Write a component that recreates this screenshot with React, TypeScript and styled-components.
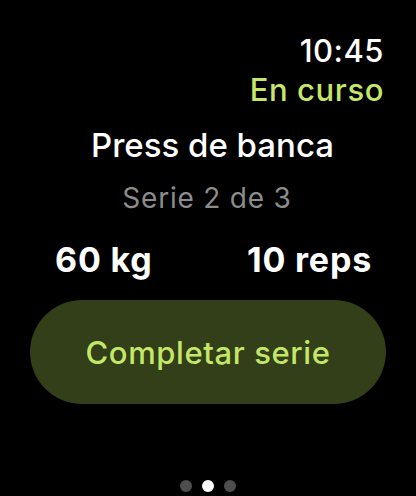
import React from 'react';
import styled, { createGlobalStyle } from 'styled-components';

const GlobalStyle = createGlobalStyle`
  html, body {
    margin: 0;
    padding: 0;
    background: #000000;
  }
  body {
    font-family: Inter, "Noto Sans", sans-serif;
    -webkit-font-smoothing: antialiased;
  }
`;

const Screen = styled.div`
  width: 416px;
  height: 496px;
  background: #000000;
  display: flex;
  flex-direction: column;
  box-sizing: border-box;
  padding: 33px 32px 0 30px;
  color: #ffffff;
`;

const StatusBar = styled.div`
  display: flex;
  flex-direction: column;
  align-items: flex-end;
`;

const Time = styled.div`
  font-size: 31px;
  line-height: 36px;
  font-weight: 500;
  letter-spacing: 0.5px;
  color: #ffffff;
`;

const State = styled.div`
  font-size: 31px;
  line-height: 36px;
  font-weight: 500;
  letter-spacing: 0.6px;
  color: #c4e76a;
  margin-top: 3px;
`;

const Title = styled.div`
  text-align: center;
  font-size: 33px;
  line-height: 40px;
  font-weight: 500;
  padding-left: 11px;
  margin-top: 17px;
`;

const Subtitle = styled.div`
  text-align: center;
  font-size: 28px;
  line-height: 34px;
  letter-spacing: 0.8px;
  color: #8c8c8c;
  margin-top: 16px;
`;

const Stats = styled.div`
  display: flex;
  justify-content: space-between;
  padding: 0 12px 0 25px;
  margin-top: 25px;
`;

const Stat = styled.div`
  font-size: 34px;
  line-height: 40px;
  font-weight: 700;
  letter-spacing: 0.8px;
`;

const Button = styled.button`
  margin: 20px -2px 0 0;
  height: 104px;
  border: none;
  border-radius: 52px;
  background: #323f18;
  color: #c4e76a;
  font-family: inherit;
  font-size: 31px;
  font-weight: 500;
  letter-spacing: 0.6px;
  padding: 0;
  cursor: pointer;
`;

const Pager = styled.div`
  margin: auto -32px 4px -30px;
  display: flex;
  justify-content: center;
  gap: 10px;
`;

const Dot = styled.span<{ active?: boolean }>`
  width: 12px;
  height: 12px;
  border-radius: 50%;
  background: ${({ active }) => (active ? '#ffffff' : '#4d4d4d')};
`;

export default function App() {
  const [done, setDone] = React.useState(false);

  return (
    <>
      <GlobalStyle />
      <Screen>
        <StatusBar>
          <Time>10:45</Time>
          <State>En curso</State>
        </StatusBar>
        <Title>Press de banca</Title>
        <Subtitle>Serie 2 de 3</Subtitle>
        <Stats>
          <Stat>60 kg</Stat>
          <Stat>10 reps</Stat>
        </Stats>
        <Button onClick={() => setDone(!done)}>Completar serie</Button>
        <Pager>
          <Dot />
          <Dot active />
          <Dot />
        </Pager>
      </Screen>
    </>
  );
}
